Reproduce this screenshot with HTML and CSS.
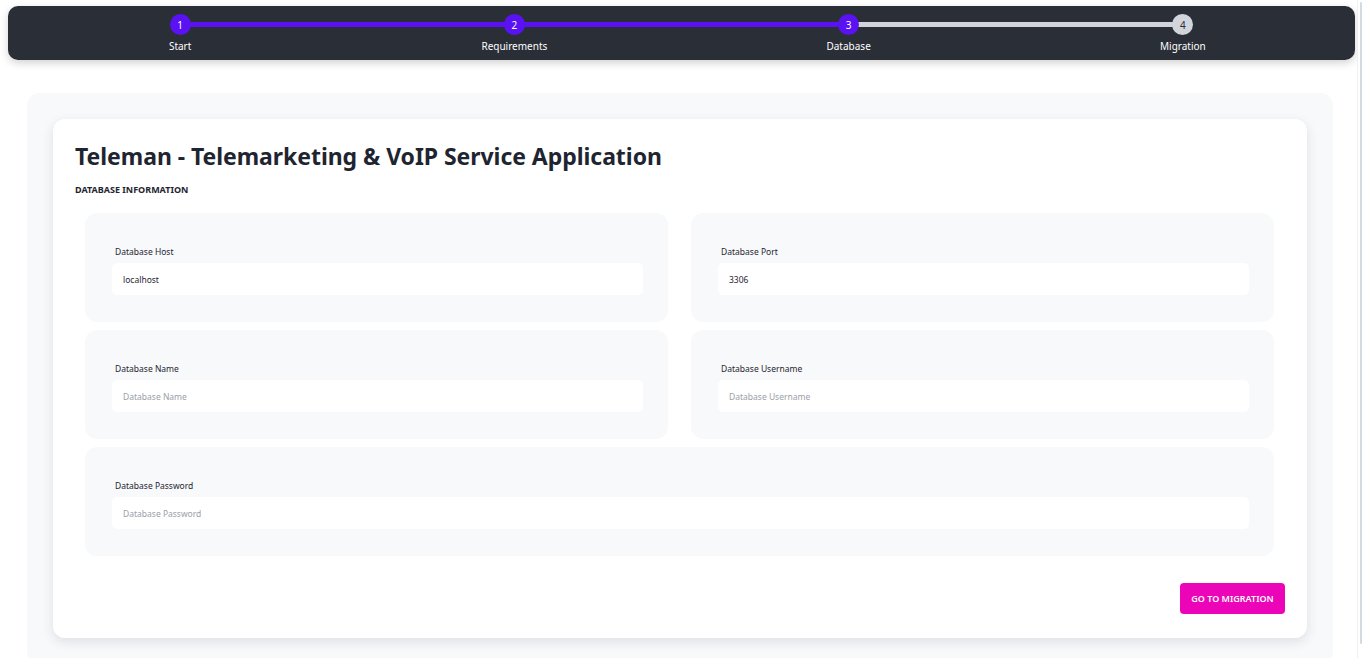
FILE: index.html
```html
<!DOCTYPE html>
<html lang="en">
<head>
<meta charset="utf-8">
<title>Teleman Installer - Database</title>
<link rel="stylesheet" href="styles.css">
</head>
<body>
<header class="stepper">
  <div class="step done">
    <div class="track"><span class="dot">1</span></div>
    <span class="step-label">Start</span>
  </div>
  <div class="step done">
    <div class="track"><span class="dot">2</span></div>
    <span class="step-label">Requirements</span>
  </div>
  <div class="step current">
    <div class="track"><span class="dot">3</span></div>
    <span class="step-label">Database</span>
  </div>
  <div class="step pending last">
    <div class="track"><span class="dot">4</span></div>
    <span class="step-label">Migration</span>
  </div>
</header>

<main class="panel">
  <section class="card">
    <h1 class="title">Teleman - Telemarketing &amp; VoIP Service Application</h1>
    <h2 class="subtitle">DATABASE INFORMATION</h2>
    <form class="fields">
      <div class="field">
        <label class="field-label">Database Host</label>
        <input class="input" type="text" value="localhost">
      </div>
      <div class="field">
        <label class="field-label">Database Port</label>
        <input class="input" type="text" value="3306">
      </div>
      <div class="field">
        <label class="field-label">Database Name</label>
        <input class="input" type="text" placeholder="Database Name">
      </div>
      <div class="field">
        <label class="field-label">Database Username</label>
        <input class="input" type="text" placeholder="Database Username">
      </div>
      <div class="field wide">
        <label class="field-label">Database Password</label>
        <input class="input" type="password" placeholder="Database Password">
      </div>
    </form>
    <div class="actions">
      <button class="btn" type="button">GO TO MIGRATION</button>
    </div>
  </section>
</main>
<div class="scrollbar" aria-hidden="true"></div>
</body>
</html>
```

FILE: styles.css
```css
body {
  margin: 0;
  background: #ffffff;
  font-family: "Noto Sans", "Open Sans", "Liberation Sans", sans-serif;
  color: #1f2430;
}

/* Decorative scrollbar track (browser chrome in the reference) */
.scrollbar {
  position: fixed;
  top: 0;
  bottom: 0;
  right: 0;
  width: 7px;
  background: #ffffff;
  border-left: 1px solid #eef1f4;
}
.scrollbar::after {
  content: "";
  position: absolute;
  top: 2px;
  bottom: 14px;
  left: 2px;
  width: 2px;
  background: #d3dae2;
  border-radius: 1px;
}

/* Stepper */
.stepper {
  margin: 6px 10px 0 8px;
  height: 54px;
  box-sizing: border-box;
  padding: 8px 5px 0 5px;
  background: #2a2e37;
  border-radius: 10px;
  box-shadow: 0 3px 8px rgba(0, 0, 0, 0.18);
  display: grid;
  grid-template-columns: repeat(4, 1fr);
}
.step {
  display: flex;
  flex-direction: column;
  align-items: center;
}
.track {
  position: relative;
  width: 100%;
  height: 21px;
  display: flex;
  justify-content: center;
  align-items: center;
}
.track::after {
  content: "";
  position: absolute;
  left: 50%;
  width: 100%;
  top: 8px;
  height: 5px;
  background: #d1d5db;
  z-index: 0;
}
.step.done .track::after {
  background: #5a12f2;
}
.step.current .track::after {
  background: #d1d5db;
}
.step.last .track::after {
  display: none;
}
.dot {
  position: relative;
  z-index: 1;
  width: 21px;
  height: 21px;
  border-radius: 50%;
  background: #5a12f2;
  color: #ffffff;
  font-size: 10px;
  display: flex;
  align-items: center;
  justify-content: center;
}
.step.pending .dot {
  background: #d1d5db;
  color: #2a2e37;
}
.step-label {
  margin-top: 5px;
  color: #ffffff;
  font-size: 10px;
  line-height: 13px;
}

/* Panel */
.panel {
  margin: 33px 32px 0 27px;
  padding: 26px;
  background: #f8f9fb;
  border-radius: 12px;
}
.card {
  background: #ffffff;
  border-radius: 12px;
  padding: 22px 22px 24px 22px;
  box-shadow: 0 4px 12px rgba(30, 40, 60, 0.12);
}
.title {
  margin: 0;
  font-size: 23px;
  line-height: 30px;
  font-weight: 700;
  color: #1f2530;
  letter-spacing: -0.05px;
}
.subtitle {
  margin: 13px 0 0 0;
  font-size: 9px;
  line-height: 12px;
  font-weight: 700;
  color: #1f2530;
}
.fields {
  margin: 17px 11px 0 10px;
  display: grid;
  grid-template-columns: 1fr 1fr;
  column-gap: 23px;
  row-gap: 8px;
}
.field {
  background: #f8f9fb;
  border-radius: 12px;
  padding: 33px 25px 27px 27px;
  display: flex;
  flex-direction: column;
}
.field.wide {
  grid-column: 1 / 3;
}
.field-label {
  font-size: 8.5px;
  line-height: 12px;
  margin-left: 3px;
  color: #1f2530;
}
.input {
  margin-top: 5px;
  height: 32px;
  box-sizing: border-box;
  border: none;
  outline: none;
  border-radius: 5px;
  background: #ffffff;
  padding: 0 11px;
  font-family: inherit;
  font-size: 8.5px;
  color: #1f2530;
}
.input::placeholder {
  color: #9aa0a8;
}
.actions {
  margin-top: 27px;
  display: flex;
  justify-content: flex-end;
}
.btn {
  width: 105px;
  height: 31px;
  border: none;
  border-radius: 4px;
  background: #ec05b8;
  color: #ffffff;
  font-family: inherit;
  font-size: 9px;
  font-weight: 600;
  padding: 0;
}
```
